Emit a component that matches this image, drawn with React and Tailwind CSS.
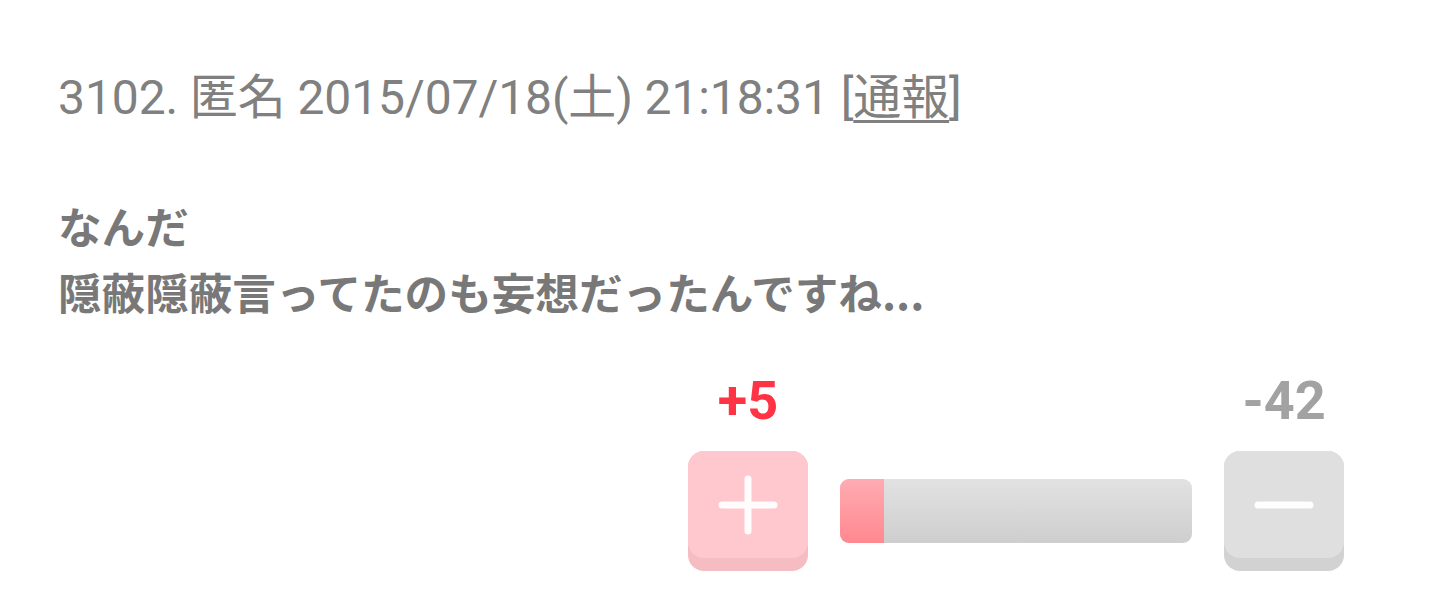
export default function App() {
  const plusCount = 5;
  const minusCount = 42;
  const ratio = plusCount / (plusCount + minusCount);

  return (
    <div className="w-[1440px] h-[601px] bg-white overflow-hidden">
      <div className="pl-[58px] pt-[70px]">
        {/* post header */}
        <div
          className="text-[48px] leading-[56px] text-[#808080] whitespace-nowrap tracking-[-0.1px]"
          style={{ fontFamily: 'Roboto, "Noto Sans CJK JP", sans-serif' }}
        >
          3102. 匿名 2015/07/18(土) 21:18:31 [<span className="underline underline-offset-[6px] decoration-[3px]">通報</span>]
        </div>

        {/* post body */}
        <div
          className="mt-[66px] text-[43.6px] leading-[66px] font-bold text-[#787878] whitespace-nowrap"
          style={{ fontFamily: '"Noto Sans CJK JP", sans-serif' }}
        >
          <div>なんだ</div>
          <div>隠蔽隠蔽言ってたのも妄想だったんですね...</div>
        </div>
      </div>

      {/* vote controls */}
      <div className="flex justify-end pr-[96px] mt-[47px]">
        <div className="flex items-end gap-[32px]">
          <div className="flex flex-col items-center w-[120px]">
            <div
              className="text-[54px] leading-[60px] font-bold text-[#ff3344]"
              style={{ fontFamily: 'Roboto, sans-serif' }}
            >
              +{plusCount}
            </div>
            <div className="mt-[20px] w-[120px] h-[120px] rounded-[16px] bg-[#f5bcc1]">
              <div className="h-[107px] rounded-[16px] bg-[#ffc8ce] flex items-center justify-center">
                <svg width="60" height="60" viewBox="0 0 60 60">
                  <path d="M30 4v52M4 30h52" stroke="#ffffff" strokeOpacity="0.95" strokeWidth="7" strokeLinecap="round" />
                </svg>
              </div>
            </div>
          </div>

          <div className="mb-[28px] w-[352px] h-[64px] rounded-[9px] overflow-hidden flex bg-gradient-to-b from-[#e2e2e2] to-[#cecece]">
            <div
              className="h-full bg-gradient-to-b from-[#ffabb2] to-[#ff8890]"
              style={{ width: `${Math.max(ratio * 352, 44)}px` }}
            />
          </div>

          <div className="flex flex-col items-center w-[120px]">
            <div
              className="text-[54px] leading-[60px] font-bold text-[#a2a2a2]"
              style={{ fontFamily: 'Roboto, sans-serif' }}
            >
              -{minusCount}
            </div>
            <div className="mt-[20px] w-[120px] h-[120px] rounded-[16px] bg-[#d2d2d2]">
              <div className="h-[107px] rounded-[16px] bg-[#dfdfdf] flex items-center justify-center">
                <svg width="60" height="60" viewBox="0 0 60 60">
                  <path d="M4 30h52" stroke="#ffffff" strokeOpacity="0.95" strokeWidth="7" strokeLinecap="round" />
                </svg>
              </div>
            </div>
          </div>
        </div>
      </div>
    </div>
  );
}
